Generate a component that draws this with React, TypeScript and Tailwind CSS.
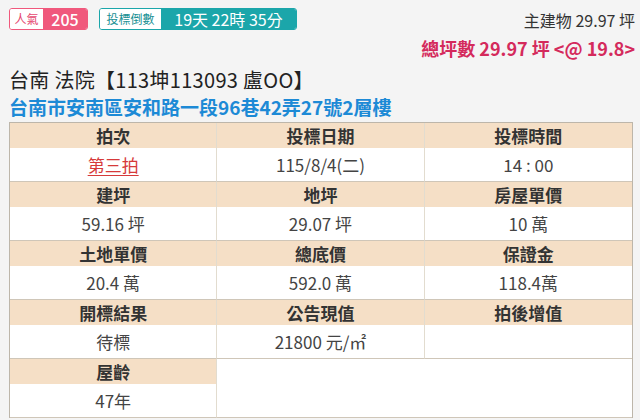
import React from "react";

const FONT = { fontFamily: '"Noto Sans CJK TC", "Open Sans", sans-serif' };

type Cell = { label: string; value?: React.ReactNode };

const rows: Cell[][] = [
  [
    { label: "拍次", value: <a className="text-[#d63a3a] underline underline-offset-[3px] decoration-1">第三拍</a> },
    { label: "投標日期", value: "115/8/4(二)" },
    { label: "投標時間", value: "14 : 00" },
  ],
  [
    { label: "建坪", value: "59.16 坪" },
    { label: "地坪", value: "29.07 坪" },
    { label: "房屋單價", value: "10 萬" },
  ],
  [
    { label: "土地單價", value: "20.4 萬" },
    { label: "總底價", value: "592.0 萬" },
    { label: "保證金", value: "118.4萬" },
  ],
  [
    { label: "開標結果", value: "待標" },
    { label: "公告現值", value: "21800 元/㎡" },
    { label: "拍後增值", value: "" },
  ],
];

function InfoCell({ cell, last }: { cell: Cell; last?: boolean }) {
  return (
    <div className={`flex flex-col border-b border-[#cfc6b8] ${last ? "" : "border-r border-r-[#e2dccf]"}`}>
      <div className="h-[25px] bg-[#f5dfc6] flex items-center justify-center text-[17px] font-bold text-[#333]">
        {cell.label}
      </div>
      <div className="h-[33px] bg-white flex items-center justify-center text-[17px] text-[#444]">
        {cell.value}
      </div>
    </div>
  );
}

export default function App() {
  return (
    <div style={FONT} className="w-[640px] h-[420px] overflow-hidden bg-[#f4f4f4] text-[#333]">
      {/* top bar */}
      <div className="flex justify-between pl-[9px] pr-[5px]">
        <div className="flex items-start gap-[11px] pt-[8px]">
          <div className="flex h-[22px] rounded-[3px] overflow-hidden border border-[#f0587c]">
            <span className="w-[33px] bg-white flex items-center justify-center text-[12px] text-[#e5486f]">人氣</span>
            <span className="w-[44px] bg-[#f0587c] flex items-center justify-center text-[16px] font-medium text-white">205</span>
          </div>
          <div className="flex h-[22px] rounded-[3px] overflow-hidden border border-[#1ba6aa]">
            <span className="w-[61px] bg-white flex items-center justify-center text-[12px] text-[#178f93]">投標倒數</span>
            <span className="w-[135px] bg-[#1ba6aa] flex items-center justify-center text-[16px] text-white whitespace-nowrap">
              19天 22時 35分
            </span>
          </div>
        </div>
        <div className="flex flex-col items-end pt-[7px]">
          <div className="text-[16px] leading-[26px] text-[#333]">主建物 29.97 坪</div>
          <div className="text-[18px] leading-[30px] font-bold text-[#d42a5c]">總坪數 29.97 坪 &lt;@ 19.8&gt;</div>
        </div>
      </div>

      {/* title */}
      <div className="pl-[9px] mt-[3px]">
        <div className="text-[20px] leading-[27px] text-[#222] tracking-[0.3px]">台南 法院【113坤113093 盧OO】</div>
        <div className="text-[19px] leading-[27px] font-bold text-[#1d8ad6]">台南市安南區安和路一段96巷42弄27號2層樓</div>
      </div>

      {/* table */}
      <div className="ml-[9px] mt-[2px] w-[624px] border border-[#bdb6aa] border-b-0 grid grid-cols-3">
        {rows.map((r, i) =>
          r.map((c, j) => <InfoCell key={`${i}-${j}`} cell={c} last={j === 2} />)
        )}
        <InfoCell cell={{ label: "屋齡", value: "47年" }} />
        <div className="col-span-2 bg-white border-b border-[#cfc6b8]" />
      </div>
    </div>
  );
}
